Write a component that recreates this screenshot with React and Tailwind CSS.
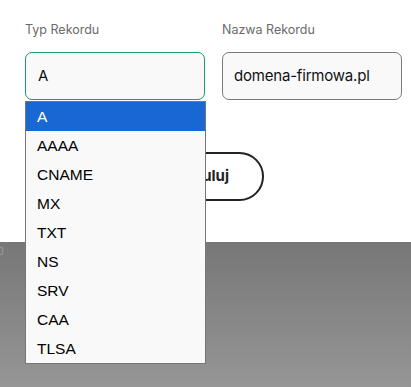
import React from 'react';

const options = ['A', 'AAAA', 'CNAME', 'MX', 'TXT', 'NS', 'SRV', 'CAA', 'TLSA'];

const App = () => {
  return (
    <div className="relative w-[411px] h-[387px] overflow-hidden bg-white" style={{ fontFamily: 'Inter, "Noto Sans", sans-serif' }}>
      <div className="h-[242px] px-[25px] pt-[22px]">
        <div className="grid grid-cols-[180px_180px] gap-x-[17px]">
          <label className="text-[12.5px] text-[#6a6a6a] leading-[16px]">Typ Rekordu</label>
          <label className="text-[12.5px] text-[#6a6a6a] leading-[16px]">Nazwa Rekordu</label>
          <div className="mt-[14px] h-[48px] rounded-[7px] border border-[#1f9a6e] bg-[#f9f9f9] flex items-center px-[12px] text-[15px] tracking-[-0.2px] text-[#111]">
            A
          </div>
          <div className="mt-[14px] h-[48px] rounded-[7px] border border-[#7a7a7a] bg-[#f9f9f9] flex items-center px-[11px] text-[15px] tracking-[-0.2px] text-[#111]">
            domena-firmowa.pl
          </div>
        </div>
        <div className="mt-[52px] flex">
          <button className="ml-[115px] h-[49px] w-[124px] rounded-full border-2 border-[#222] bg-white text-[15px] font-bold text-[#222] flex items-center justify-end pr-[33px]">
            Anuluj
          </button>
        </div>
      </div>
      <div className="h-[145px] bg-gradient-to-b from-[#777777] to-[#969696]">
        <span className="block text-[11px] text-[#9a9a9a] leading-[14px] pt-[2px] -ml-[3px]">0</span>
      </div>

      <ul
        className="absolute left-[25px] top-[101px] w-[181px] border border-[#767676] bg-[#f9f9f9]"
        style={{ fontFamily: '"Liberation Sans", Arial, sans-serif' }}
      >
        {options.map((o, i) => (
          <li
            key={o}
            className={
              i === 0
                ? 'h-[29px] flex items-center px-[11px] pt-[1px] text-[15.5px] bg-[#1967d2] text-white'
                : 'h-[29px] flex items-center px-[11px] pt-[1px] text-[15.5px] text-black'
            }
          >
            {o}
          </li>
        ))}
      </ul>
    </div>
  );
};

export default App;
